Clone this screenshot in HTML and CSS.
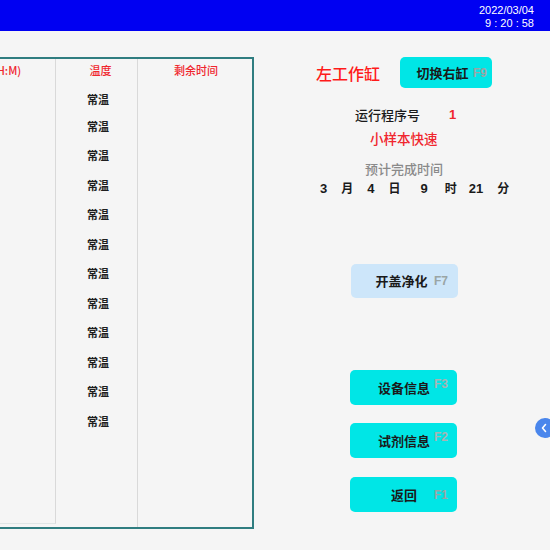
FILE: index.html
```html
<!DOCTYPE html>
<html lang="zh-CN">
<head>
<meta charset="utf-8">
<title>工作缸状态</title>
<link rel="stylesheet" href="styles.css">
</head>
<body>
<header class="topbar">
  <div class="clock">
    <div>2022/03/04</div>
    <div>9 : 20 : 58</div>
  </div>
</header>

<main class="content">
  <section class="grid-table">
    <div class="col col-time">
      <div class="col-head">时间(H:M)</div>
      <div class="col-body"></div>
    </div>
    <div class="col col-temp">
      <div class="col-head">温度</div>
      <ul class="col-body">
        <li>常温</li><li>常温</li><li>常温</li><li>常温</li>
        <li>常温</li><li>常温</li><li>常温</li><li>常温</li>
        <li>常温</li><li>常温</li><li>常温</li><li>常温</li>
      </ul>
    </div>
    <div class="col col-left">
      <div class="col-head">剩余时间</div>
      <div class="col-body"></div>
    </div>
  </section>

  <aside class="panel">
    <div class="panel-head">
      <h1 class="tank-name">左工作缸</h1>
      <button class="key-btn cyan switch"><span class="label">切换右缸</span><span class="fkey">F9</span></button>
    </div>
    <div class="program-row">
      <span class="program-label">运行程序号</span>
      <span class="program-no">1</span>
    </div>
    <div class="program-name">小样本快速</div>
    <div class="eta-label">预计完成时间</div>
    <div class="eta">
      <span class="num">3</span><span class="unit">月</span><span class="num">4</span><span class="unit">日</span><span class="num wide">9</span><span class="unit hour">时</span><span class="num tight">21</span><span class="unit">分</span>
    </div>

    <button class="key-btn pale purge"><span class="label">开盖净化</span><span class="fkey">F7</span></button>
    <button class="key-btn cyan device"><span class="label">设备信息</span><span class="fkey raised">F3</span></button>
    <button class="key-btn cyan reagent"><span class="label">试剂信息</span><span class="fkey raised">F2</span></button>
    <button class="key-btn cyan back"><span class="label">返回</span><span class="fkey">F1</span></button>
  </aside>
</main>

<button class="side-toggle" aria-label="展开">
  <svg width="8" height="10" viewBox="0 0 8 10"><path d="M5.5 1.5 L2.5 5 L5.5 8.5" fill="none" stroke="#fff" stroke-width="1.6" stroke-linecap="round" stroke-linejoin="round"/></svg>
</button>
</body>
</html>
```

FILE: styles.css
```css
* { box-sizing: border-box; }

html, body {
  margin: 0;
  padding: 0;
}

body {
  width: 550px;
  height: 550px;
  overflow: hidden;
  background: #f5f5f5;
  font-family: "Noto Sans CJK SC", "Noto Sans", sans-serif;
  color: #1a1a1a;
  position: relative;
}

/* ---- title bar ---- */
.topbar {
  height: 31px;
  background: #0000f2;
  display: flex;
  justify-content: flex-end;
  align-items: flex-start;
  padding: 4px 16px 0 0;
}

.clock {
  font-family: "Liberation Sans", Arial, sans-serif;
  font-size: 11px;
  line-height: 12.5px;
  color: #fff;
  text-align: right;
}

/* ---- main area ---- */
.content {
  display: flex;
  align-items: flex-start;
  padding-top: 26px;
}

.grid-table {
  margin-left: -65px;
  width: 319px;
  height: 472px;
  border: 2px solid #2f7d80;
  display: grid;
  grid-template-columns: 119px 82px 114px;
  flex-shrink: 0;
}

.col {
  display: flex;
  flex-direction: column;
  border-right: 1px solid #d9d9d9;
}
.col:last-child { border-right: none; }

.col-time {
  border-bottom: 1px solid #e0e6e6;
  margin-bottom: 3px;
}

.col-head {
  height: 28px;
  padding-top: 3px;
  line-height: 16px;
  font-size: 11px;
  font-weight: 500;
  color: #f0262e;
  text-align: center;
}
.col-temp .col-head { padding-left: 8px; }
.col-left .col-head { padding-left: 2px; }

.col-body {
  list-style: none;
  margin: 0;
  padding: 0;
}

.col-temp li {
  height: 29.5px;
  display: flex;
  align-items: center;
  justify-content: center;
  padding-left: 3px;
  font-size: 11px;
  font-weight: 700;
  color: #1e1e1e;
}
.col-temp li:first-child { height: 24px; }

/* ---- right panel ---- */
.panel {
  margin-left: 46px;
  width: 230px;
  display: flex;
  flex-direction: column;
  align-items: flex-start;
}

.panel-head {
  display: flex;
  align-items: center;
  gap: 20px;
  padding-left: 16px;
}

.tank-name {
  margin: 0;
  font-size: 16px;
  font-weight: 500;
  color: #ff1a1a;
  line-height: 20px;
}

.key-btn {
  display: grid;
  grid-template-columns: 1fr auto 1fr;
  align-items: center;
  border: none;
  border-radius: 5px;
  font-family: inherit;
  padding: 0 9px 0 10px;
  cursor: pointer;
}
.key-btn .label {
  grid-column: 2;
  font-size: 13px;
  font-weight: 700;
  color: #1a1a1a;
  line-height: 16px;
}
.key-btn .fkey {
  grid-column: 3;
  justify-self: end;
  font-family: "Liberation Sans", Arial, sans-serif;
  font-size: 12px;
  font-weight: 700;
  color: #9aa5a5;
}
.key-btn .fkey.raised {
  position: relative;
  top: -4px;
  color: #a9b3b3;
}

.cyan { background: #00e6e6; }
.pale { background: #cde6fa; }

.switch {
  width: 92px;
  height: 31px;
  padding: 0 5px 0 0;
}
.switch .label { position: relative; left: -1px; }

.program-row {
  margin-top: 18px;
  margin-left: 55px;
  display: flex;
  gap: 29px;
  line-height: 18px;
}
.program-label {
  font-size: 13px;
  font-weight: 500;
  color: #1a1a1a;
}
.program-no {
  font-family: "Liberation Sans", Arial, sans-serif;
  font-size: 13px;
  font-weight: 700;
  color: #f0262e;
}

.program-name {
  margin-top: 5px;
  margin-left: 70px;
  font-size: 13.5px;
  font-weight: 500;
  color: #f0262e;
  line-height: 18px;
}

.eta-label {
  margin-top: 13px;
  margin-left: 65px;
  font-size: 13px;
  font-weight: 500;
  color: #8a8a8a;
  line-height: 18px;
}

.eta {
  margin-top: 1px;
  margin-left: 20px;
  display: flex;
  align-items: baseline;
  gap: 14px;
  font-weight: 700;
  line-height: 18px;
  color: #1a1a1a;
}
.eta .num {
  font-family: "Liberation Sans", Arial, sans-serif;
  font-size: 13px;
}
.eta .unit { font-size: 12px; }
.eta .wide { margin-left: 6px; }
.eta .hour { margin-left: 3px; }
.eta .tight { margin-left: -2px; }

.purge {
  margin-top: 66px;
  margin-left: 51px;
  width: 107px;
  height: 34px;
  padding: 0 10px 0 4px;
}

.device, .reagent, .back {
  margin-left: 50px;
  width: 107px;
  height: 35px;
}
.device { margin-top: 72px; }
.reagent { margin-top: 18px; }
.back { margin-top: 19px; }

/* ---- edge drawer handle ---- */
.side-toggle {
  position: absolute;
  left: 535px;
  top: 418px;
  width: 20px;
  height: 20px;
  border-radius: 50%;
  border: none;
  background: #4a86ec;
  display: flex;
  align-items: center;
  justify-content: flex-start;
  padding: 0 0 0 5px;
}
```
